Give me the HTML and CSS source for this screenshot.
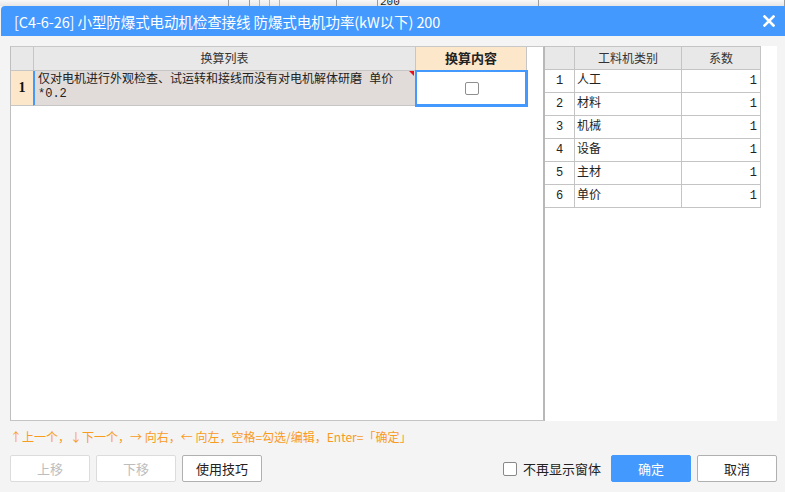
FILE: index.html
```html
<!DOCTYPE html>
<html lang="zh-CN">
<head>
<meta charset="utf-8">
<link rel="stylesheet" href="styles.css">
</head>
<body>
<div class="backdrop">
  <div class="bd-a"></div>
  <div class="bd-b"></div>
  <div class="bd-o"></div>
  <div class="bd-o"></div>
  <div class="bd-o"></div>
  <div class="bd-c"></div>
  <div class="bd-d"></div>
  <div class="bd-e">200</div>
  <div class="bd-f"></div>
</div>
<div class="dialog">
  <div class="titlebar">
    <span class="title">[C4-6-26] 小型防爆式电动机检查接线 防爆式电机功率(kW以下) 200</span>
    <svg class="close" width="12" height="12" viewBox="0 0 12 12"><path d="M1.5 1.5 L10.5 10.5 M10.5 1.5 L1.5 10.5" stroke="#fff" stroke-width="2.6" stroke-linecap="square"/></svg>
  </div>
  <div class="content">
    <div class="panels">
      <div class="left-panel">
        <div class="grid-left">
          <div class="cell hdr"></div>
          <div class="cell hdr center">换算列表</div>
          <div class="cell hdr center peach bold">换算内容</div>
          <div class="cell rownum">1</div>
          <div class="cell desc">仅对电机进行外观检查、试运转和接线而没有对电机解体研磨 单价*0.2</div>
          <div class="cell pick"><span class="cb"></span></div>
        </div>
      </div>
      <div class="right-panel">
        <div class="grid-right">
          <div class="rc rh"></div>
          <div class="rc rh center">工料机类别</div>
          <div class="rc rh center">系数</div>
          <div class="rc center">1</div><div class="rc">人工</div><div class="rc num">1</div>
          <div class="rc center">2</div><div class="rc">材料</div><div class="rc num">1</div>
          <div class="rc center">3</div><div class="rc">机械</div><div class="rc num">1</div>
          <div class="rc center">4</div><div class="rc">设备</div><div class="rc num">1</div>
          <div class="rc center">5</div><div class="rc">主材</div><div class="rc num">1</div>
          <div class="rc center">6</div><div class="rc">单价</div><div class="rc num">1</div>
        </div>
      </div>
    </div>
    <div class="hint">↑上一个，↓下一个，→ 向右，← 向左，空格=勾选/编辑，Enter=「确定」</div>
    <div class="actions">
      <button class="btn disabled">上移</button>
      <button class="btn disabled">下移</button>
      <button class="btn">使用技巧</button>
      <label class="noshow"><span class="cb2"></span>不再显示窗体</label>
      <button class="btn primary">确定</button>
      <button class="btn">取消</button>
    </div>
  </div>
</div>
</body>
</html>
```

FILE: styles.css
```css
* { box-sizing: border-box; }
html, body { margin: 0; padding: 0; }
body {
  width: 785px;
  height: 492px;
  overflow: hidden;
  background: #f4f4f4;
  font-family: "Noto Sans CJK SC", "Noto Sans", sans-serif;
  color: #222;
}
.backdrop {
  display: flex;
  height: 6px;
  background: linear-gradient(#f8f8f8, #e6e6e6);
  overflow: hidden;
}
.backdrop > div { height: 6px; border-right: 1px solid #9c9c9c; }
.bd-a { width: 229px; }
.bd-b { width: 21px; }
.backdrop > .bd-o { width: 10px; border-right: 1px solid #f5a54a; }
.bd-c { width: 57px; }
.bd-d { width: 41px; }
.bd-e { width: 161px; font: 11px/4px "Liberation Mono", monospace; padding-left: 2px; color: #222; }
.bd-f { flex: 1; border-right: none; }

.dialog { background: #f4f4f4; }
.titlebar {
  height: 30px;
  margin-left: 1px;
  background: #4499ff;
  border-radius: 4px 0 0 0;
  display: flex;
  align-items: center;
  justify-content: space-between;
  padding: 0 10px 0 13px;
}
.title { color: #fff; font-size: 14.5px; letter-spacing: -0.1px; }
.close { display: block; margin-top: -1px; }

.content { padding: 10px 8px 0 10px; }
.panels { display: flex; height: 375px; }
.left-panel {
  width: 535px;
  background: #fff;
  border-left: 1px solid #bfbfbf;
  border-top: 1px solid #c8c8c8;
  border-bottom: 1px solid #c4c4c4;
  border-right: 2px solid #b8b8b8;
}
.grid-left {
  display: grid;
  grid-template-columns: 23px 382px 111px;
  grid-template-rows: 24px 35px;
}
.cell {
  border-right: 1px solid #c6c6c6;
  border-bottom: 1px solid #c6c6c6;
  font-size: 12px;
  color: #333;
  position: relative;
}
.hdr { background: #e8e8e8; line-height: 22px; }
.center { text-align: center; }
.peach { background: #fde7ca; }
.bold { font-weight: bold; font-size: 13px; color: #222; }
.rownum {
  background: #fde7ca;
  border-right-color: #4499ff;
  font: bold 14px/34px "Liberation Serif", serif;
  text-align: center;
  color: #111;
}
.desc {
  background: #e1dcda;
  box-shadow: inset 1px 0 0 #4499ff;
  padding: 2px 2px 0 4px;
  line-height: 14px;
  font-family: "Liberation Mono", "Noto Sans CJK SC", monospace;
  font-size: 12px;
  color: #222;
}
.desc::after {
  content: "";
  position: absolute;
  right: 1px;
  top: 0;
  border-top: 5px solid #e8111b;
  border-left: 5px solid transparent;
}
.pick {
  box-shadow: 0 0 0 1px #4499ff, inset 0 0 0 1px #4499ff;
  border-color: #4499ff;
  display: flex;
  align-items: center;
  justify-content: center;
  padding-left: 1px;
}
.cb {
  width: 14px;
  height: 13px;
  border: 1px solid #8e8e8e;
  border-radius: 2px;
  background: #fff;
}

.right-panel { width: 232px; background: #fff; }
.grid-right {
  display: grid;
  width: 216px;
  grid-template-columns: 30px 107px 79px;
  grid-auto-rows: 23px;
  border-top: 1px solid #c4c4c4;
}
.rc {
  border-right: 1px solid #c4c4c4;
  border-bottom: 1px solid #c4c4c4;
  font-size: 12px;
  line-height: 22px;
  padding-left: 2px;
  font-family: "Liberation Mono", "Noto Sans CJK SC", monospace;
  color: #222;
}
.rh { background: #e8e8e8; font-family: "Noto Sans CJK SC", sans-serif; color: #333; }
.rc.center { text-align: center; padding-left: 0; }
.num { text-align: right; padding-right: 3px; }

.hint {
  height: 20px;
  margin-top: 6px;
  line-height: 20px;
  font-size: 12px;
  color: #f99b1c;
  white-space: nowrap;
}
.actions {
  display: flex;
  align-items: center;
  gap: 6px;
  margin-top: 8px;
}
.btn {
  width: 80px;
  height: 27px;
  background: #fff;
  border: 1px solid #b0b0b0;
  border-radius: 2px;
  font-family: "Noto Sans CJK SC", sans-serif;
  font-size: 13px;
  color: #222;
  padding: 0;
}
.btn.disabled { border-color: #dcdcdc; color: #bdbdbd; }
.btn.primary { background: #4499ff; border-color: #4499ff; color: #fff; }
.noshow {
  margin-left: auto;
  margin-right: 4px;
  display: flex;
  align-items: center;
  gap: 6px;
  font-size: 13px;
  color: #222;
}
.cb2 {
  width: 14px;
  height: 14px;
  border: 1px solid #888;
  border-radius: 2px;
  background: #fff;
}
```
